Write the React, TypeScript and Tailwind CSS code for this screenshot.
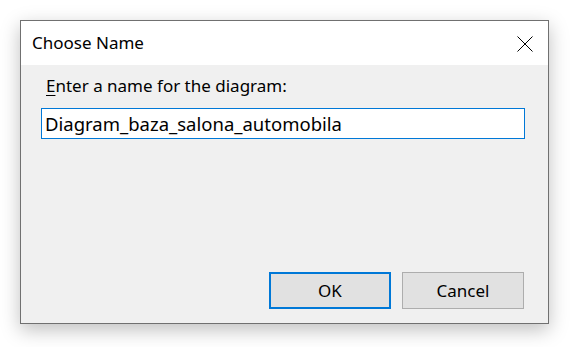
import React from "react";

export default function App() {
  return (
    <div className="h-[347px] w-[572px] bg-white pl-[20px] pt-[20px]" style={{ fontFamily: '"Noto Sans", "Open Sans", sans-serif' }}>
      <div className="flex h-[304px] w-[529px] flex-col border border-[#707070] bg-[#f0f0f0] shadow-[0_6px_18px_rgba(0,0,0,0.25)]">
        <div className="flex h-[44px] items-center justify-between bg-white pl-[11px] pr-[15px]">
          <span className="text-[17px] text-black">Choose Name</span>
          <svg width="16" height="16" viewBox="0 0 16 16" className="mt-[1px]">
            <path d="M0.5 0.5 L15.5 15.5 M15.5 0.5 L0.5 15.5" stroke="#000" strokeWidth="1" fill="none" />
          </svg>
        </div>
        <div className="flex flex-1 flex-col px-[20px] pt-[10px]">
          <label className="pl-[5px] text-[17px] leading-[22px] text-black">
            <span className="underline underline-offset-[3px]">E</span>nter a name for the diagram:
          </label>
          <input
            className="mt-[11px] h-[31px] w-[484px] border border-[#0078d7] bg-white px-[3px] text-[18.5px] text-black outline-none"
            defaultValue="Diagram_baza_salona_automobila"
          />
          <div className="mt-auto mb-[14px] flex justify-end gap-[11px] pr-[4px]">
            <button className="h-[37px] w-[122px] border-2 border-[#0078d7] bg-[#e1e1e1] text-[17px] text-black">OK</button>
            <button className="h-[37px] w-[122px] border border-[#adadad] bg-[#e1e1e1] text-[17px] text-black">Cancel</button>
          </div>
        </div>
      </div>
    </div>
  );
}
